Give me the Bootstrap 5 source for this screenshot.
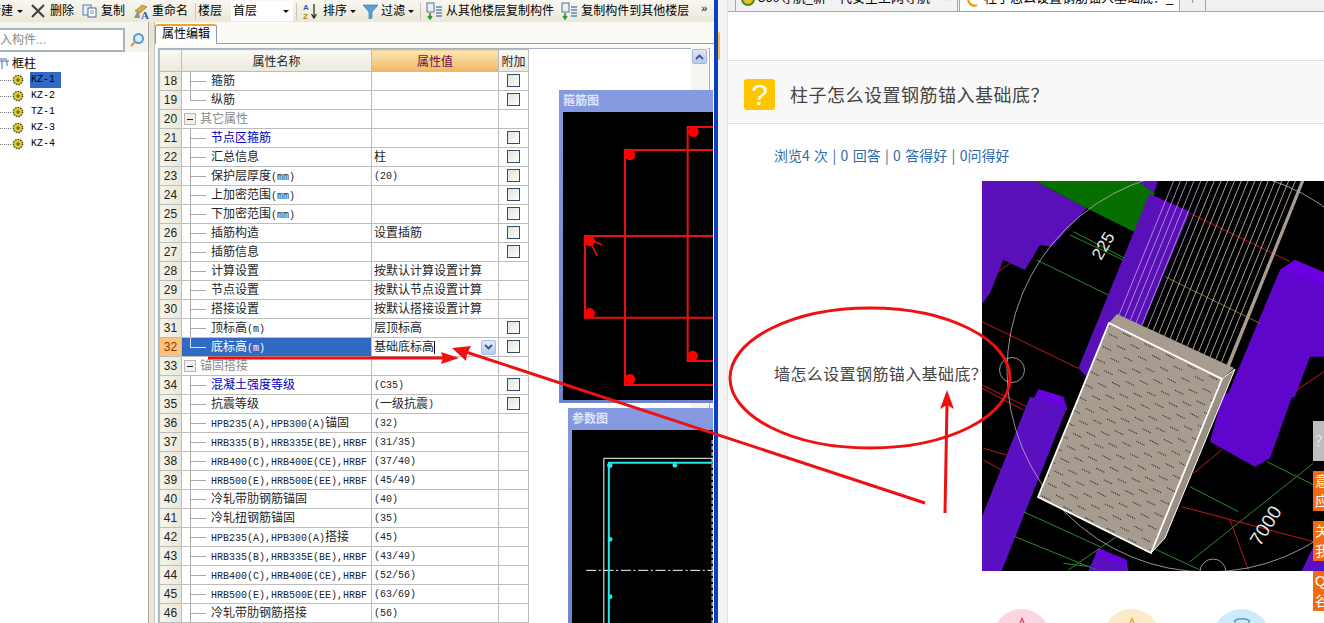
<!DOCTYPE html>
<html lang="zh-CN">
<head>
    <meta charset="UTF-8">
    <title>柱子怎么设置钢筋锚入基础底？</title>
    <link href="https://cdn.jsdelivr.net/npm/bootstrap@5.3.0/dist/css/bootstrap.min.css" rel="stylesheet" />
    <style>
        html, body { height: 623px; overflow: hidden; }
        body { width: 1324px; font: 12px/1.2 "Liberation Sans", "Noto Sans CJK SC", sans-serif; color: #000; background: #fff; }
        .lat { font: 10px "Liberation Mono", monospace; }
        .shell { height: 623px; overflow: hidden; }

        /* left app */
        .app-win { width: 714px; height: 623px; background: #fbfaf5; flex: none; overflow: hidden; }
        .tool-bar { height: 22px; background: linear-gradient(#f8f7f0, #ebe8d8); white-space: nowrap; overflow: hidden; flex: none; }
        .tool-bar svg { flex: none; display: block; }
        .tb-sep { width: 1px; height: 17px; background: #c9c6b4; flex: none; }
        .tb-caret { width: 0; height: 0; border: 3px solid transparent; border-top: 3px solid #111; border-bottom: 0; flex: none; }
        .tb-combo { width: 62px; height: 20px; background: #fff; padding: 0 4px 0 2px; flex: none; }
        .tree-pane { width: 148px; background: #fff; flex: none; }
        .search-row { height: 30px; background: #f4f3ec; flex: none; }
        .search-box { width: 125px; height: 24px; margin-top: 6px; background: #fff; border: 2px solid #a9b2ba; border-left: 0; color: #8a8a8a; overflow: hidden; white-space: nowrap; padding-top: 3px; }
        .search-box span { margin-left: -12px; }
        .tree-list { font-size: 12px; margin-top: 4px; }
        .tree-list li { height: 16px; padding-left: 0; }
        .tree-dots { width: 11px; border-bottom: 1px dotted #777; height: 1px; flex: none; }
        .tree-lab { padding: 2px 2px 1px 1px; height: 16px; margin-left: 6px; width: 31px; }
        .tree-sel { background: #316ac5; color: #000; }
        .split-bar { width: 7px; background: #e8e6d8; border-left: 1px solid #a9a79b; border-right: 1px solid #c8c6b8; flex: none; }
        .prop-pane { width: 559px; position: relative; }
        .prop-tabs { height: 20px; margin-top: 2px; border-bottom: 1px solid #8b9bb0; flex-wrap: nowrap; flex: none; }
        .prop-tabs .nav-link { width: 62px; height: 20px; padding: 1px 0 0; text-align: center; color: #000; font-size: 12px; background: #fff; border: 1px solid #8b9bb0; border-top: 2px solid #eaa52e; border-bottom: 0; border-radius: 3px 3px 0 0; }
        .prop-frame { margin: 4px 4px 0 3px; height: 577px; border: 1px solid #a3b0bf; background: #fff; overflow: hidden; flex: none; }
        .table.prop-table { width: 369px; table-layout: fixed; margin: 0; border-color: #bdbdbd; font-size: 12px; }
        .table.prop-table > :not(caption) > * > * { padding: 0; height: 19px; line-height: 18px; border-color: #bdbdbd; white-space: nowrap; overflow: hidden; box-shadow: none; }
        .table.prop-table th { height: 22px; text-align: center; font-weight: 400; background: linear-gradient(#f9f8f3, #ece9dd); }
        .table.prop-table th.val-head { background: linear-gradient(#fce6b6, #f0b763); color: #6b0f4a; }
        .table.prop-table td.num-cell { background: linear-gradient(90deg, #f6f5ec, #e9e7d8); text-align: center; color: #222; }
        .table.prop-table td.num-on { background: #fdc27e; color: #8a3a00; }
        .table.prop-table td.row-on { background: #316ac5; color: #fff; }
        .name-in { display: flex; align-items: center; height: 18px; }
        .tl-mark { width: 16px; height: 18px; margin: 0 5px 0 8px; flex: none; background: linear-gradient(#aaa, #aaa) 0 0 / 1px 100% no-repeat, linear-gradient(#aaa, #aaa) 0 50% / 100% 1px no-repeat; }
        .tl-end { background: linear-gradient(#aaa, #aaa) 0 0 / 1px 50% no-repeat, linear-gradient(#aaa, #aaa) 0 50% / 100% 1px no-repeat; }
        .group-box { width: 12px; height: 12px; border: 1px solid #b8b8b8; background: #f1f1ec; margin: 0 4px 0 2px; display: flex; align-items: center; justify-content: center; flex: none; }
        .group-box i { width: 6px; height: 1px; background: #222; }
        .group-txt { color: #8a8a8a; }
        .blue-txt { color: #0000c0; }
        .row-on .tl-mark { background: linear-gradient(#d5def0, #d5def0) 0 0 / 1px 50% no-repeat, linear-gradient(#d5def0, #d5def0) 0 50% / 100% 1px no-repeat; }
        .val-in { display: flex; align-items: center; height: 18px; padding-left: 2px; }
        .caret-bar { width: 1px; height: 13px; background: #000; }
        .drop-btn { width: 15px; height: 15px; margin-left: auto; margin-right: 2px; background: linear-gradient(#dfe9fb, #b8cdf0); border: 1px solid #a9bfe4; border-radius: 2px; display: flex; align-items: center; justify-content: center; }
        .chk-box { display: block; width: 13px; height: 13px; margin: 2px auto 0; border: 1px solid #2f4f6f; background: linear-gradient(135deg, #e2e2da, #fff); }
        .scroll-col { position: absolute; left: 536px; top: 26px; width: 17px; height: 597px; background: #f4f4f0; }
        .scroll-up { width: 15px; height: 15px; margin: 1px; background: linear-gradient(#dfe7f8, #b6c6ea); border: 1px solid #a7b7dc; border-radius: 2px; display: flex; align-items: center; justify-content: center; }

        /* floating drawing windows */
        .draw-win { position: absolute; right: 1px; background: linear-gradient(#859ae0, #6f84cc); padding: 0 0 4px 4px; overflow: hidden; }
        .draw-title { height: 22px; padding-top: 4px; color: #dfe6f8; font-weight: 700; font-size: 12px; }
        .draw-win svg { display: block; background: #000; }
        .win-a { left: 559px; top: 90px; height: 313px; }
        .win-b { left: 568px; top: 408px; height: 215px; }

        .blue-line { width: 4px; background: #0b3ec4; flex: none; }

        /* right browser */
        .page-side { width: 9px; background: #f3f3f3; flex: none; }
        .side-mark { width: 2px; height: 28px; margin-top: 32px; background: #f3c33c; border-radius: 0 2px 2px 0; }
        .page-main { width: 597px; height: 623px; overflow: hidden; border-left: 1px solid #e4e4e4; position: relative; }
        .tab-strip { height: 12px; position: relative; background: #f0f0f0; border-bottom: 1px solid #a8a8a8; overflow: hidden; font-size: 13px; flex: none; padding-left: 7px; }
        .br-tab { height: 12px; margin-top: -1px; line-height: 1; padding: 0 5px; white-space: nowrap; overflow: hidden; border-right: 1px solid #a8a8a8; border-left: 1px solid #a8a8a8; gap: 3px; flex: none; }
        .br-tab span { margin-top: -8px; }
        .br-tab .tab-x { margin-left: auto; color: #999; }
        .br-one { width: 223px; background: #f2f2f2; }
        .br-two { width: 221px; background: #fff; margin-left: 1px; }
        .br-plus { width: 26px; height: 11px; border-right: 1px solid #a8a8a8; text-align: center; color: #888; line-height: 0; flex: none; }
        .q-head { height: 64px; margin-top: 48px; background: #f8f8f8; border-top: 1px solid #e0e0e0; border-bottom: 1px solid #e0e0e0; padding: 5px 0 0 16px; gap: 15px; flex: none; }
        .q-icon { width: 31px; height: 31px; border-radius: 3px; background: #ffc600; color: #fff; font-size: 30px; line-height: 31px; text-align: center; font-family: "Liberation Sans", sans-serif; }
        .q-title { font-size: 18px; letter-spacing: .5px; color: #444; font-family: "Noto Sans CJK SC", sans-serif; font-weight: 400; }
        .q-stats { height: 57px; padding: 21px 0 0 46px; font-size: 14px; word-spacing: 1.2px; color: #2f6ba8; flex: none; font-family: "Noto Sans CJK SC", sans-serif; line-height: 20px; }
        .q-body { height: 390px; flex: none; }
        .q-text { width: 208px; margin-left: 46px; font-size: 16px; letter-spacing: .4px; color: #444; white-space: nowrap; font-family: "Noto Sans CJK SC", sans-serif; flex: none; padding-bottom: 4px; }
        .q-pic { display: block; flex: none; background: #000; margin-left: 0; }
        .act-row { gap: 53px; margin: 38px 0 0 265px; }
        .act-dot { width: 57px; height: 57px; border-radius: 50%; flex: none; display: flex; justify-content: center; padding-top: 8px; }
        .dot-pink { background: #fbd6e0; }
        .dot-yel { background: #fdeac8; }
        .dot-blue { background: #cfeafa; }
        .side-tabs { position: absolute; right: 0; top: 421px; width: 11px; overflow: hidden; }
        .side-tab { width: 32px; height: 40px; margin-bottom: 10px; background: #f26b10; color: #fff; font-size: 14px; line-height: 20px; padding-left: 2px; }
        .side-gray { background: #bdbdbd; color: #e8e8e8; line-height: 40px; }
        .ink-layer { position: absolute; left: 0; top: 0; pointer-events: none; }
    </style>
</head>
<body class="position-relative">
    <div class="shell d-flex">
        <div class="app-win d-flex flex-column position-relative">
            <div class="tool-bar d-flex align-items-center">
                <span style="margin-left:-11px">新建</span>
                <i class="tb-caret ms-1"></i>
                <svg style="margin-left:8px" width="14" height="14" viewBox="0 0 14 14"><path d="M1 1 L13 13 M13 1 L1 13" stroke="#444" stroke-width="2.2"/></svg>
                <span style="margin-left:5px">删除</span>
                <svg style="margin-left:8px" width="15" height="14" viewBox="0 0 15 14"><rect x="1" y="1" width="8" height="10" fill="#e8eef8" stroke="#5a7aa8"/><rect x="6" y="4" width="8" height="9" fill="#fff" stroke="#4a6a98"/><path d="M8 7h4M8 9h4" stroke="#7a93b8"/></svg>
                <span style="margin-left:4px">复制</span>
                <svg style="margin-left:8px" width="17" height="17" viewBox="0 0 17 17"><path d="M2 8 L9 2 L14 4 L7 10Z" fill="#d8a850" stroke="#8a6a20" stroke-width=".6"/><path d="M1 15l3-6h2l1 6z" fill="#8a9a70"/><text x="8" y="16" font-size="11" font-weight="700" fill="#2a5ab0" font-family="Liberation Serif">A</text></svg>
                <span style="margin-left:2px">重命名</span>
                <i class="tb-sep" style="margin-left:7px"></i>
                <span style="margin-left:2px">楼层</span>
                <div class="tb-combo d-flex align-items-center justify-content-between" style="margin-left:9px"><span>首层</span><i class="tb-caret"></i></div>
                <i class="tb-sep" style="margin-left:3px"></i>
                <svg style="margin-left:5px" width="17" height="18" viewBox="0 0 17 18"><text x="1" y="8" font-size="8" font-weight="700" fill="#2a5ab0" font-family="Liberation Sans">A</text><text x="1" y="17" font-size="8" font-weight="700" fill="#b08020" font-family="Liberation Sans">Z</text><path d="M12 2v13M9.5 12l2.5 4 2.5-4" stroke="#222" fill="none" stroke-width="1.2"/></svg>
                <span style="margin-left:4px">排序</span>
                <i class="tb-caret" style="margin-left:3px"></i>
                <svg style="margin-left:7px" width="15" height="15" viewBox="0 0 15 15"><path d="M0 1h15L9 8v6L6 15V8z" fill="#5aa0d8" stroke="#2a70b0" stroke-width=".6"/></svg>
                <span style="margin-left:3px">过滤</span>
                <i class="tb-caret" style="margin-left:3px"></i>
                <i class="tb-sep" style="margin-left:6px"></i>
                <svg style="margin-left:5px" width="17" height="18" viewBox="0 0 17 18"><rect x="1" y="1" width="7" height="9" fill="#e8eef8" stroke="#5a7088"/><path d="M4 11v5M2 14l2 3 2-3" stroke="#2a9a3a" fill="none" stroke-width="1.6"/><path d="M10 5h6M10 8h6M10 11h6M10 14h6" stroke="#5a88b8" stroke-width="1.6"/></svg>
                <span style="margin-left:3px">从其他楼层复制构件</span>
                <svg style="margin-left:7px" width="17" height="18" viewBox="0 0 17 18"><rect x="1" y="1" width="7" height="9" fill="#e8eef8" stroke="#5a7088"/><path d="M4 11v5M2 14l2 3 2-3" stroke="#2a9a3a" fill="none" stroke-width="1.6"/><path d="M10 5h6M10 8h6M10 11h6M10 14h6" stroke="#5a88b8" stroke-width="1.6"/></svg>
                <span style="margin-left:3px">复制构件到其他楼层</span>
                <span style="margin-left:12px;font-size:11px;line-height:1;margin-top:-6px">&raquo;</span>
            </div>
            <div class="d-flex flex-grow-1">
                <div class="tree-pane d-flex flex-column">
                    <div class="search-row d-flex">
                        <div class="search-box"><span>输入构件...</span></div>
                        <svg class="ms-1" style="margin-top:10px" width="16" height="16" viewBox="0 0 16 16"><circle cx="9.5" cy="6.5" r="4.5" fill="#dcebf8" stroke="#5a9ad0" stroke-width="2"/><path d="M6 10L2 14" stroke="#d8a040" stroke-width="2.4"/></svg>
                    </div>
                    <ul class="tree-list list-unstyled mb-0" id="tree"></ul>
                </div>
                <div class="split-bar"></div>
                <div class="prop-pane d-flex flex-column">
                    <ul class="nav prop-tabs">
                        <li class="nav-item"><a class="nav-link active" href="#">属性编辑</a></li>
                    </ul>
                    <div class="prop-frame">
                        <table class="table table-bordered prop-table">
                            <colgroup><col style="width:22px"><col style="width:190px"><col style="width:127px"><col style="width:30px"></colgroup>
                            <thead><tr><th></th><th>属性名称</th><th class="val-head">属性值</th><th>附加</th></tr></thead>
                            <tbody id="rows"></tbody>
                        </table>
                    </div>
                    <div class="scroll-col">
                        <div class="scroll-up"><svg width="9" height="6" viewBox="0 0 9 6"><path d="M1 5l3.5-3.5L8 5" fill="none" stroke="#35568f" stroke-width="1.8"/></svg></div>
                    </div>
                </div>
            </div>

            <div class="draw-win win-a">
                <div class="draw-title">箍筋图</div>
                <svg width="151" height="288" viewBox="0 0 151 288">
                    <g transform="translate(-13,-26) scale(.3333)">
                        <g fill="none" stroke="#ec0f0f" stroke-width="6">
                            <path d="M520 192H225V897H520"/>
                            <path d="M520 123H413V825H520"/>
                            <path d="M520 450H105V695H520"/>
                            <path d="M119 460L157 477M119 465L142 510" stroke-width="5"/>
                        </g>
                        <g fill="#f00">
                            <circle cx="430" cy="137" r="16"/><circle cx="240" cy="207" r="16"/><circle cx="119" cy="465" r="16"/>
                            <circle cx="119" cy="682" r="16"/><circle cx="428" cy="810" r="16"/><circle cx="240" cy="880" r="16"/>
                        </g>
                    </g>
                </svg>
            </div>
            <div class="draw-win win-b">
                <div class="draw-title">参数图</div>
                <svg width="142" height="193" viewBox="0 0 142 193">
                    <g transform="translate(-12.5,-30) scale(.3333)">
                        <path d="M460 175H133V700" fill="none" stroke="#fff" stroke-width="3"/>
                        <path d="M458 120V700" fill="none" stroke="#fff" stroke-width="3" stroke-dasharray="12 6"/>
                        <path d="M80 511H460" stroke="#fff" stroke-width="3" stroke-dasharray="30 8 6 8"/>
                        <path d="M460 188H148V700" fill="none" stroke="#1ee8e8" stroke-width="6"/>
                        <g fill="#1ee8e8"><circle cx="151" cy="196" r="8"/><circle cx="346" cy="196" r="7"/><circle cx="152" cy="418" r="7"/><circle cx="152" cy="590" r="7"/></g>
                    </g>
                </svg>
            </div>
        </div>
        <div class="blue-line"></div>
        <div class="page-side"><div class="side-mark"></div></div>
        <div class="page-main d-flex flex-column">
            <div class="tab-strip d-flex">
                <div class="br-tab br-one d-flex"><svg width="14" height="14" viewBox="0 0 14 14" style="margin-top:-7px;flex:none"><circle cx="7" cy="7" r="6" fill="#e8c020" stroke="#4a8a20" stroke-width="2"/></svg><span>360导航_新一代安全上网导航</span><span class="tab-x">×</span></div>
                <div class="br-tab br-two d-flex"><svg width="16" height="14" viewBox="0 0 16 14" style="margin-top:-5px;flex:none"><path d="M12 11A6 6 0 0 1 4 3" fill="none" stroke="#f0a020" stroke-width="2.4"/></svg><span>柱子怎么设置钢筋锚入基础底？_</span><span class="tab-x">×</span></div>
                <div class="br-plus">+</div>
            </div>
            <div class="q-head d-flex align-items-center">
                <div class="q-icon">?</div>
                <div class="q-title">柱子怎么设置钢筋锚入基础底？</div>
            </div>
            <div class="q-stats">浏览4 次 | 0 回答 | 0 答得好 | 0问得好</div>
            <div class="q-body d-flex align-items-center">
                <div class="q-text">墙怎么设置钢筋锚入基础底？</div>
                <svg class="q-pic" id="pic" width="342" height="390" viewBox="0 0 342 390">
                    <defs>
                        <pattern id="dots" width="24" height="14" patternUnits="userSpaceOnUse" patternTransform="rotate(26.4)">
                            <rect width="24" height="14" fill="#a89c90"/>
                            <path d="M2 3.5h1M4 3.5h1M6 3.5h1M8 3.5h1M10 3.5h1M14 10.5h1M16 10.5h1M18 10.5h1M20 10.5h1M22 10.5h1" stroke="#1a1a1a"/>
                        </pattern>
                    </defs>
                    <g transform="translate(-2,-1) scale(.3333)">
                        <polygon points="6,0 160,0 320,85 215,200 180,195 135,270 70,240 30,340 6,372" fill="#5a10b8"/>
                        <polygon points="160,0 470,0 525,40 462,155 320,85" fill="#076f00"/>
                        <polygon points="470,0 535,0 522,38" fill="#5a10b8"/>
                        <polygon points="508,42 630,95 490,430 320,590 295,565" fill="#5a10b8"/>
                        <polygon points="508,42 630,95 600,90 515,50" fill="#6e00e0"/>
                        <polygon points="900,270 945,240 1035,278 1035,530 990,530 945,650 720,720 720,700" fill="#6006cc"/>
                        <polygon points="900,270 945,240 1035,278 1035,315" fill="#6a00e0"/>
                        <polygon points="175,628 250,650 262,690 130,720" fill="#5a10c0"/>
                        <polygon points="175,628 250,650 262,690 170,650" fill="#6a00e0"/>
                        <g fill="none" stroke-width="3">
                            <g stroke="#2b8a2b">
                                <path d="M280 155L435 235M270 165L430 240M170 240L385 345"/>
                            </g>
                            <g stroke="#c01818">
                                <path d="M6 425L295 565M6 615L140 680M6 625L130 690M630 100L930 245M950 630L1032 575M55 275L90 250"/>
                            </g>
                            <path d="M555 290L840 430" stroke="#7a6a20"/>
                        </g>
                    </g>
                    <g transform="translate(-2,219) scale(.3333)">
                        <polygon points="730,-20 940,-20 870,175 825,200 690,125" fill="#6006cc"/>
                        <polygon points="355,445 440,480 445,513 325,513" fill="#5a10c0"/>
                        <polygon points="355,445 440,480 435,495 345,465" fill="#6a00e0"/>
                        <polygon points="1000,440 1035,400 1035,513 965,513" fill="#5a10c0"/>
                        <polygon points="150,-10 262,20 65,513 6,513 6,350" fill="#5a10c0"/>
                        <g fill="none" stroke-width="3">
                            <g stroke="#2b8a2b">
                                <path d="M130 335L360 440M105 410L350 510M630 260L775 335M520 445L660 510M860 185L1032 270M630 485L1000 190M265 510L410 410M250 490L330 500"/>
                            </g>
                            <g stroke="#c01818">
                                <path d="M605 320L1000 425M640 220L725 150M750 360L805 510M10 145L80 165M10 180L65 210"/>
                            </g>
                        </g>
                    </g>
                    <circle cx="226" cy="190" r="201" fill="none" stroke="#b8b8b8" stroke-width=".8"/>
                    <circle cx="30" cy="189" r="12.5" fill="none" stroke="#b8b8b8" stroke-width=".8"/>
                    <circle cx="231" cy="391" r="13" fill="none" stroke="#b8b8b8" stroke-width=".8"/>
                    <g id="bars" stroke-width=".8"></g>
                    <path d="M321 -1L246 186" stroke="#a89c90" stroke-width="3.2"/>
                    <polygon points="135,133 252,187 240,198 127,142" fill="#a89c90"/>
                    <polygon points="127,142 240,198 169,372 56,316" fill="url(#dots)"/>
                    <polygon points="240,198 253,188 183,357 169,372" fill="#9a8f84"/>
                    <path d="M127 142L240 198L169 372L56 316Z" fill="none" stroke="#fff" stroke-width="1.8"/>
                    <path d="M240 198L253 188L183 357L169 372" fill="none" stroke="#fff" stroke-width="1"/>
                    <text x="0" y="0" transform="translate(119,80) rotate(-60)" fill="#e8e8e8" font-size="17" font-family="Liberation Sans">225</text>
                    <text x="0" y="0" transform="translate(278,366) rotate(-58)" fill="#e8e8e8" font-size="19" font-family="Liberation Sans">7000</text>
                </svg>
            </div>
            <div class="act-row d-flex">
                <div class="act-dot dot-pink"><svg width="14" height="20" viewBox="0 0 14 20"><path d="M7 1L3 12M7 1l4 11" stroke="#d8506a" fill="none" stroke-width="1.4"/></svg></div>
                <div class="act-dot dot-yel"><svg width="14" height="20" viewBox="0 0 14 20"><path d="M7 1L3 12M7 1l4 11" stroke="#e0a848" fill="none" stroke-width="1.4"/></svg></div>
                <div class="act-dot dot-blue"><svg width="20" height="16" viewBox="0 0 20 16"><path d="M2 4c4-3 12-3 16 0M3 4v8M17 4v8" stroke="#4a9ad0" fill="none" stroke-width="1.4"/></svg></div>
            </div>
        </div>
    </div>

    <div class="side-tabs">
        <div class="side-tab side-gray">？</div>
        <div class="side-tab">意<br>应</div>
        <div class="side-tab">关<br>我</div>
        <div class="side-tab">Q<br>谷</div>
    </div>

    <svg class="ink-layer" width="1324" height="623" viewBox="0 0 1324 623">
        <g fill="none" stroke="#ee1111">
            <ellipse cx="870" cy="378" rx="140" ry="70" stroke-width="3"/>
            <path d="M208 358H446" stroke-width="3"/>
            <path d="M925 503L466 352" stroke-width="3"/>
            <path d="M945 513L947 404" stroke-width="3"/>
        </g>
        <g fill="#ee1111">
            <polygon points="459,358 441,352 443,358 441,364"/>
            <polygon points="452,348 471,346 467,354 466,361"/>
            <polygon points="947,390 954,409 947,405 940,409"/>
        </g>
    </svg>

    <script>
        const treeItems = ['KZ-1', 'KZ-2', 'TZ-1', 'KZ-3', 'KZ-4'];
        const gear = '<svg width="12" height="12" viewBox="0 0 12 12" style="flex:none;margin-left:1px"><circle cx="6" cy="6" r="4.6" fill="#e8d020" stroke="#4a4a10" stroke-width="1.4" stroke-dasharray="1.6 1"/><circle cx="6" cy="6" r="1.8" fill="#6a6a20"/></svg>';
        let treeHtml = '<li class="d-flex align-items-center"><svg width="10" height="12" viewBox="0 0 10 12" style="flex:none"><path d="M0 3h9M2 3v8M7 3v5M0 1h7" stroke="#3a6ab0" fill="none"/></svg><span style="margin-left:2px">框柱</span></li>';
        treeItems.forEach((t, i) => {
            treeHtml += `<li class="d-flex align-items-center"><i class="tree-dots"></i>${gear}<span class="tree-lab lat ${i === 0 ? 'tree-sel' : ''}">${t}</span></li>`;
        });
        document.getElementById('tree').innerHTML = treeHtml;

        // 行号, 名称, 值, 是否有复选框, 样式
        const rows = [
            [18, '箍筋', '', 1], [19, '纵筋', '', 1, 'end'], [20, '其它属性', '', 0, 'group'],
            [21, '节点区箍筋', '', 1, 'blue'], [22, '汇总信息', '柱', 1], [23, '保护层厚度(mm)', '(20)', 1],
            [24, '上加密范围(mm)', '', 1], [25, '下加密范围(mm)', '', 1], [26, '插筋构造', '设置插筋', 1],
            [27, '插筋信息', '', 1], [28, '计算设置', '按默认计算设置计算', 0], [29, '节点设置', '按默认节点设置计算', 0],
            [30, '搭接设置', '按默认搭接设置计算', 0], [31, '顶标高(m)', '层顶标高', 1], [32, '底标高(m)', '基础底标高', 1, 'on'],
            [33, '锚固搭接', '', 0, 'group'], [34, '混凝土强度等级', '(C35)', 1, 'blue'], [35, '抗震等级', '(一级抗震)', 1],
            [36, 'HPB235(A),HPB300(A)锚固', '(32)', 0], [37, 'HRB335(B),HRB335E(BE),HRBF', '(31/35)', 0],
            [38, 'HRB400(C),HRB400E(CE),HRBF', '(37/40)', 0], [39, 'HRB500(E),HRB500E(EE),HRBF', '(45/49)', 0],
            [40, '冷轧带肋钢筋锚固', '(40)', 0], [41, '冷轧扭钢筋锚固', '(35)', 0], [42, 'HPB235(A),HPB300(A)搭接', '(45)', 0],
            [43, 'HRB335(B),HRB335E(BE),HRBF', '(43/49)', 0], [44, 'HRB400(C),HRB400E(CE),HRBF', '(52/56)', 0],
            [45, 'HRB500(E),HRB500E(EE),HRBF', '(63/69)', 0], [46, '冷轧带肋钢筋搭接', '(56)', 0]
        ];
        const lat = s => s.replace(/[\x21-\x7e]+/g, m => `<span class="lat">${m}</span>`);
        let html = '';
        rows.forEach(([n, name, val, chk, kind]) => {
            const on = kind === 'on';
            const head = kind === 'group'
                ? '<span class="group-box"><i></i></span>'
                : `<span class="tl-mark ${kind === 'end' || on ? 'tl-end' : ''}"></span>`;
            const cls = kind === 'group' ? 'group-txt' : kind === 'blue' ? 'blue-txt' : '';
            const extra = on ? '<i class="caret-bar"></i><span class="drop-btn"><svg width="9" height="6" viewBox="0 0 9 6"><path d="M1 1l3.5 3.5L8 1" fill="none" stroke="#35568f" stroke-width="1.8"/></svg></span>' : '';
            html += `<tr><td class="num-cell ${on ? 'num-on' : ''}">${n}</td>
                <td class="${on ? 'row-on' : ''}"><div class="name-in">${head}<span class="${cls}">${lat(name)}</span></div></td>
                <td><div class="val-in">${lat(val)}${extra}</div></td>
                <td>${chk ? '<span class="chk-box"></span>' : ''}</td></tr>`;
        });
        document.getElementById('rows').innerHTML = html;

        // 钢筋线
        const NS = 'http://www.w3.org/2000/svg';
        const bars = document.getElementById('bars');
        for (let i = 0; i < 20; i++) {
            const t = i / 19;
            const x = 137 + t * 108, y = 134 + t * 50;
            const k = y / 174 + 0.02;
            const line = document.createElementNS(NS, 'line');
            line.setAttribute('x1', x); line.setAttribute('y1', y);
            line.setAttribute('x2', x + 71 * k); line.setAttribute('y2', y - 174 * k);
            line.setAttribute('stroke', i < 6 ? '#c0a8d8' : '#cfc9c0');
            bars.appendChild(line);
        }
    </script>
    <script src="https://cdn.jsdelivr.net/npm/bootstrap@5.3.0/dist/js/bootstrap.bundle.min.js"></script>
</body>
</html>
